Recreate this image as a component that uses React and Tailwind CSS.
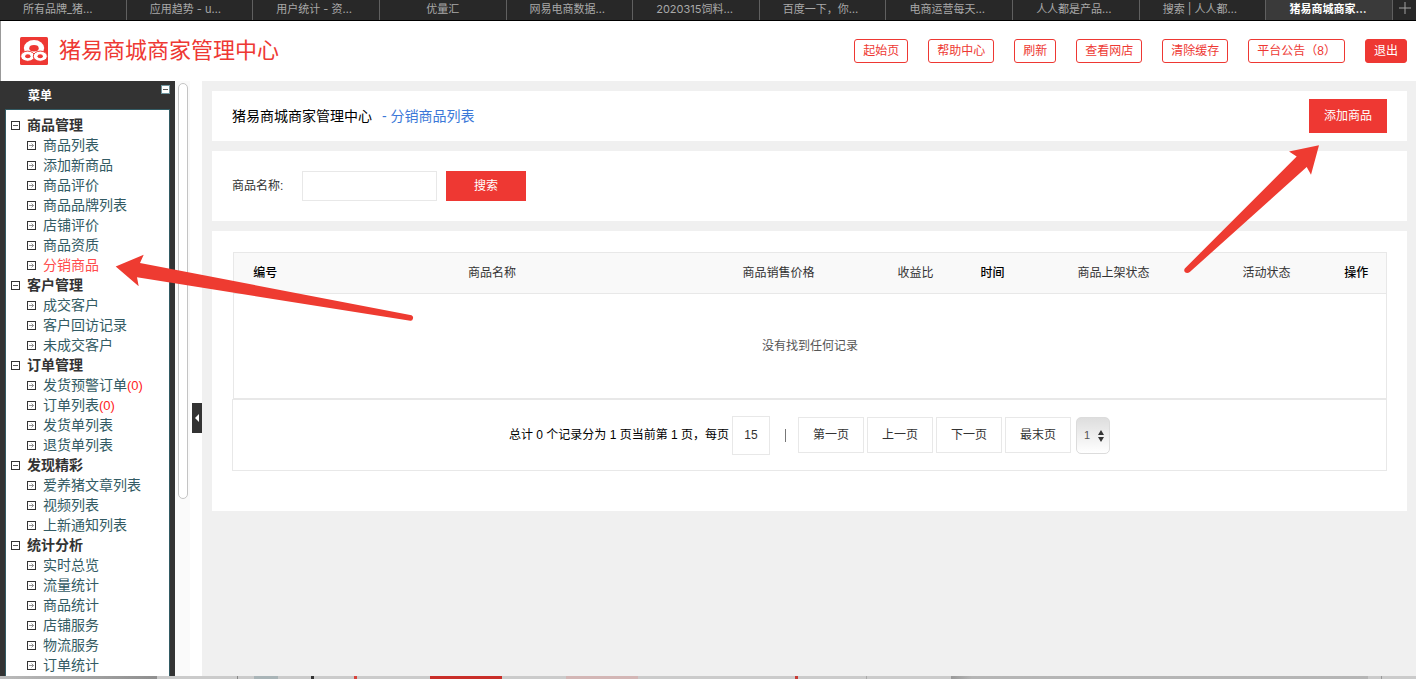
import React from "react";

const tabs = [
  "所有品牌_猪…",
  "应用趋势 - u…",
  "用户统计 - 资…",
  "优量汇",
  "网易电商数据…",
  "2020315饲料…",
  "百度一下，你…",
  "电商运营每天…",
  "人人都是产品…",
  "搜索 | 人人都…",
  "猪易商城商家…",
];

const menu = [
  {
    title: "商品管理",
    items: ["商品列表", "添加新商品", "商品评价", "商品品牌列表", "店铺评价", "商品资质", "分销商品"],
  },
  { title: "客户管理", items: ["成交客户", "客户回访记录", "未成交客户"] },
  { title: "订单管理", items: ["发货预警订单", "订单列表", "发货单列表", "退货单列表"] },
  { title: "发现精彩", items: ["爱养猪文章列表", "视频列表", "上新通知列表"] },
  {
    title: "统计分析",
    items: ["实时总览", "流量统计", "商品统计", "店铺服务", "物流服务", "订单统计"],
  },
];

const counts = { 发货预警订单: 0, 订单列表: 0 };
const activeItem = "分销商品";

const headerLinks = ["起始页", "帮助中心", "刷新", "查看网店", "清除缓存", "平台公告（8）"];
const pageLinks = ["第一页", "上一页", "下一页", "最末页"];

function Logo() {
  return (
    <svg className="size-7 shrink-0" viewBox="0 0 28 28" aria-hidden="true">
      <rect width="28" height="28" rx="1.5" fill="#ee3833" />
      <ellipse cx="14" cy="11" rx="10.200" ry="7.900" fill="#fff" />
      <ellipse cx="14" cy="11.200" rx="4.700" ry="3.200" fill="#ee3833" />
      <ellipse cx="7.700" cy="19.200" rx="7" ry="5.100" fill="#fff" stroke="#ee3833" strokeWidth="1" />
      <ellipse cx="20.300" cy="19.200" rx="7" ry="5.100" fill="#fff" stroke="#ee3833" strokeWidth="1" />
      <ellipse cx="7.800" cy="19.300" rx="2.700" ry="2" fill="#ee3833" />
      <ellipse cx="20.200" cy="19.300" rx="2.700" ry="2" fill="#ee3833" />
    </svg>
  );
}

function MinusBox({ className = "" }) {
  return (
    <svg className={`size-[9px] shrink-0 ${className}`} viewBox="0 0 9 9" aria-hidden="true">
      <rect x="0.500" y="0.500" width="8" height="8" fill="#fff" stroke="currentColor" />
      <path d="M2 4.500h5" stroke="#555" />
    </svg>
  );
}

function ArrowBox() {
  return (
    <svg className="size-[9px] shrink-0" viewBox="0 0 9 9" aria-hidden="true">
      <rect x="0.500" y="0.500" width="8" height="8" fill="#fff" stroke="#333" />
      <path d="M2 4.500h4.500M4.500 2.500l2 2-2 2" fill="none" stroke="#888" strokeWidth="0.900" />
    </svg>
  );
}

function TabBar() {
  return (
    <nav className="flex h-[21px] border-b border-black bg-[#282828] font-['Inter','Noto_Sans_CJK_SC',sans-serif] text-[11px] leading-[18px] text-[#a9a9a9]">
      {tabs.map((tab, i) => (
        <a
          key={tab}
          href="#"
          className={
            i === tabs.length - 1
              ? "min-w-0 flex-1 border-r border-[#606060] bg-[#3a3a3a] font-bold whitespace-nowrap text-white"
              : "min-w-0 flex-1 border-r border-[#606060] whitespace-nowrap"
          }
        >
          <span className={tab.endsWith("…") ? "block pl-[23px]" : "block text-center"}>{tab}</span>
        </a>
      ))}
      <button type="button" aria-label="新标签页" className="flex w-[23px] items-center justify-center pb-1">
        <svg className="size-3" viewBox="0 0 12 12" aria-hidden="true">
          <path d="M6 0v12M0 6h12" stroke="#a0a0a0" />
        </svg>
      </button>
    </nav>
  );
}

function Header() {
  return (
    <header className="flex h-[60px] items-center justify-between border-l border-[#999] bg-white pr-[9px] pl-[19px]">
      <div className="flex items-center gap-[11px]">
        <Logo />
        <h1 className="text-[22px] leading-7 text-[#ee3833]">猪易商城商家管理中心</h1>
      </div>
      <div className="flex gap-5 text-xs">
        {headerLinks.map((label) => (
          <a
            key={label}
            href="#"
            className="flex h-6 items-center rounded-[3px] border border-[#ee3833] px-2 whitespace-nowrap text-[#ee3833]"
          >
            {label}
          </a>
        ))}
        <a
          href="#"
          className="flex h-6 items-center rounded-[3px] border border-[#ee3833] bg-[#ee3833] px-2 whitespace-nowrap text-white"
        >
          退出
        </a>
      </div>
    </header>
  );
}

function Sidebar() {
  return (
    <aside className="flex w-[175px] shrink-0 flex-col bg-[#333] px-[5px]">
      <div className="flex h-7 justify-between">
        <h2 className="pl-[23px] text-xs leading-[30px] font-bold text-white">菜单</h2>
        <button type="button" aria-label="收起菜单" className="mt-1 h-[9px] text-[#6f959e]">
          <MinusBox />
        </button>
      </div>
      <ul className="flex-1 border border-b-0 border-[#335b64] bg-white pt-[5px] text-sm leading-5">
        {menu.map((group) => (
          <li key={group.title}>
            <div className="flex h-5 items-center gap-[7px] pl-[5px] font-bold text-[#333]">
              <MinusBox className="text-[#333]" />
              {group.title}
            </div>
            <ul>
              {group.items.map((item) => (
                <li key={item} className="flex h-5 items-center gap-[7px] pl-[21px]">
                  <ArrowBox />
                  <a
                    href="#"
                    className={
                      item === activeItem
                        ? "whitespace-nowrap text-[#ff4d4d]"
                        : "whitespace-nowrap text-[#335b64]"
                    }
                  >
                    {item}
                    {item in counts && (
                      <span className="text-[13px] leading-none text-[#f22]">({counts[item]})</span>
                    )}
                  </a>
                </li>
              ))}
            </ul>
          </li>
        ))}
      </ul>
    </aside>
  );
}

function Gutter() {
  return (
    <div className="flex w-[27px] shrink-0 justify-between bg-white">
      <div className="w-[15px] bg-[#fafafa] px-[3px] pt-0.5">
        <div className="h-[416px] w-[10px] rounded-full border border-[#c4c4c4] bg-white" />
      </div>
      <button
        type="button"
        aria-label="收起侧栏"
        className="mt-[322px] flex h-[30px] w-[10px] items-center justify-center bg-[#333]"
      >
        <svg className="h-2 w-1" viewBox="0 0 4 8" aria-hidden="true">
          <path d="M4 0v8L0 4z" fill="#fff" />
        </svg>
      </button>
    </div>
  );
}

function GoodsTable() {
  return (
    <div className="pl-px">
      <table className="w-full table-fixed border-collapse border border-[#e8e8e8] text-xs text-[#333]">
        <colgroup>
          <col className="w-[60px]" />
          <col />
          <col className="w-[176px]" />
          <col className="w-[98px]" />
          <col className="w-[56px]" />
          <col className="w-[186px]" />
          <col className="w-[120px]" />
          <col className="w-[60px]" />
        </colgroup>
        <thead>
          <tr className="h-[41px] border-b border-[#e8e8e8] bg-[#f9f9f9]">
            <th className="pl-[3px] font-medium text-black">编号</th>
            <th className="font-normal">商品名称</th>
            <th className="font-normal">商品销售价格</th>
            <th className="font-normal">收益比</th>
            <th className="font-medium text-black">时间</th>
            <th className="font-normal">商品上架状态</th>
            <th className="font-normal">活动状态</th>
            <th className="font-medium text-black">操作</th>
          </tr>
        </thead>
        <tbody>
          <tr className="h-[105px]">
            <td colSpan={8} className="text-center text-[#555]">
              没有找到任何记录
            </td>
          </tr>
        </tbody>
      </table>
    </div>
  );
}

function Pagination() {
  return (
    <div className="flex h-[72px] items-center justify-center border border-[#e8e8e8] text-xs text-black">
      <label htmlFor="page-size" className="whitespace-nowrap">
        总计 0 个记录分为 1 页当前第 1 页，每页
      </label>
      <input
        id="page-size"
        type="text"
        defaultValue="15"
        className="ml-[3px] h-[39px] w-[38px] border border-[#e8e8e8] text-center text-[#333]"
      />
      <span className="mr-3 ml-[15px] h-[13px] w-px bg-[#777]" />
      <div className="flex gap-[3px]">
        {pageLinks.map((label) => (
          <a
            key={label}
            href="#"
            className="flex h-9 w-[66px] items-center justify-center border border-[#e8e8e8] text-[#333]"
          >
            {label}
          </a>
        ))}
      </div>
      <div className="relative ml-[5px]">
        <select
          aria-label="页码"
          className="block h-[37px] w-[34px] appearance-none rounded-[5px] border border-[#dcdcdc] bg-linear-to-b from-[#dedede] to-white pl-[7px] text-[11px] text-[#555]"
        >
          <option>1</option>
        </select>
        <svg className="pointer-events-none absolute top-[13px] right-1.5 h-3 w-[6px]" viewBox="0 0 6 12" aria-hidden="true">
          <path d="M3 0l3 5H0zM3 12l3-5H0z" fill="#333" />
        </svg>
      </div>
    </div>
  );
}

function Main() {
  return (
    <main className="flex min-w-0 flex-1 flex-col gap-[10px] bg-[#f0f0f0] py-[10px] pr-[9px] pl-[10px]">
      <section className="flex h-[50px] items-center justify-between bg-white px-5">
        <div className="flex gap-[10px] text-sm text-black">
          <a href="#">猪易商城商家管理中心</a>
          <span className="text-[#3c78d8]">- 分销商品列表</span>
        </div>
        <a href="#" className="flex h-[34px] w-[78px] items-center justify-center bg-[#ee3833] text-xs text-white">
          添加商品
        </a>
      </section>
      <form className="flex h-[70px] items-center bg-white px-5 text-xs text-[#333]">
        <label htmlFor="goods-name" className="w-[70px]">
          商品名称:
        </label>
        <input id="goods-name" type="text" className="h-[30px] w-[135px] border border-[#e8e8e8] bg-white px-2" />
        <button type="button" className="ml-[9px] h-[30px] w-20 bg-[#ee3833] text-white">
          搜索
        </button>
      </form>
      <section className="bg-white px-5 pt-[21px] pb-10">
        <GoodsTable />
        <Pagination />
      </section>
    </main>
  );
}

function BottomStrip() {
  return (
    <div className="flex h-[3px] overflow-hidden bg-[#cbcbcb]">
      <div className="w-[157px] shrink-0 bg-linear-to-r from-[#bbb] to-[#8f8f8f]" />
      <div className="ml-20 w-px shrink-0 bg-[#888]" />
      <div className="ml-[16px] w-[24px] shrink-0 bg-[#a9b4b7]" />
      <div className="ml-[33px] w-[3px] shrink-0 bg-[#333]" />
      <div className="ml-[40px] w-[3px] shrink-0 bg-[#d8433c]" />
      <div className="ml-[73px] w-[72px] shrink-0 bg-[#c92e28]" />
      <div className="ml-[64px] w-[72px] shrink-0 bg-[#d3b6b5]" />
      <div className="ml-[157px] w-[3px] shrink-0 bg-[#c93c36]" />
      <div className="ml-[68px] w-px shrink-0 bg-[#aaa]" />
      <div className="ml-[84px] flex-1 bg-linear-to-r from-[#999] via-[#b5b5b5] via-5% to-[#b5b5b5]" />
      <div className="mr-[34px] ml-[13px] w-px shrink-0 bg-[#999]" />
    </div>
  );
}

function Annotations() {
  return (
    <>
      <svg
        className="pointer-events-none absolute top-[254px] left-[115px] h-[68px] w-[300px]"
        viewBox="115 254 300 68"
        aria-hidden="true"
      >
        <path
          d="M115.700 266.500L143.700 254.700L140 263L411.500 315.200Q413.500 316 413 318.500Q412.500 321 410.300 320.700L137 277.300L138.700 286.200Z"
          fill="#ee3b31"
        />
      </svg>
      <svg
        className="pointer-events-none absolute top-[144px] right-[96px] h-[130px] w-[138px]"
        viewBox="1182 144 138 130"
        aria-hidden="true"
      >
        <path
          d="M1319 145.300L1289 151.500L1296.700 156.500L1184.800 268.500Q1183.500 270.500 1185 272.300Q1187.300 274 1189.800 272L1306.700 167L1311 174.800Z"
          fill="#ee3b31"
        />
      </svg>
    </>
  );
}

export default function App() {
  return (
    <div className="relative flex min-h-screen flex-col bg-white font-['Liberation_Sans','Noto_Sans_CJK_SC',sans-serif]">
      <TabBar />
      <Header />
      <div className="flex flex-1">
        <Sidebar />
        <Gutter />
        <Main />
      </div>
      <BottomStrip />
      <Annotations />
    </div>
  );
}
